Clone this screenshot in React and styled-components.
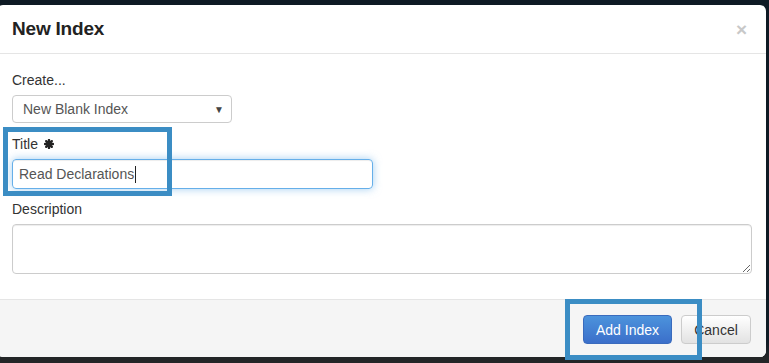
import React from 'react'
import styled, { createGlobalStyle } from 'styled-components'

const GlobalStyle = createGlobalStyle`
  html, body {
    margin: 0;
    padding: 0;
    background: #0f1b25;
    font-family: "Liberation Sans", Arial, sans-serif;
    overflow: hidden;
  }
`;

const Stage = styled.div`
  position: relative;
  width: 769px;
  height: 363px;
  background: linear-gradient(to bottom, #0e1a24 0, #0e1a24 340px, #232527 358px);
  padding-top: 5px;
  box-sizing: border-box;
`;

const Modal = styled.div`
  margin-left: -3px;
  width: 769px;
  background: #fff;
  border-radius: 6px;
  overflow: hidden;
  color: #333;
  font-size: 14px;
`;

const Header = styled.div`
  display: flex;
  align-items: center;
  justify-content: space-between;
  height: 48px;
  padding: 0 15px;
  border-bottom: 1px solid #e5e5e5;
  h4 {
    margin: 0;
    font-size: 19px;
    font-weight: bold;
    color: #222;
    letter-spacing: -0.2px;
  }
`;

const Close = styled.span`
  font-size: 19px;
  font-weight: bold;
  color: #c8c8c8;
  line-height: 1;
  margin-right: 4px;
`;

const Body = styled.div`
  padding: 16px 15px 25px;
`;

const Group = styled.div`
  margin-bottom: ${p => p.$gap ?? 11}px;
`;

const Label = styled.label`
  display: flex;
  align-items: center;
  gap: 6px;
  line-height: 20px;
  margin-bottom: 5px;
  color: #333;
`;

const Select = styled.div`
  display: flex;
  align-items: center;
  justify-content: space-between;
  width: 220px;
  height: 28px;
  box-sizing: border-box;
  border: 1px solid #ccc;
  border-radius: 4px;
  padding: 0 7px 0 10px;
  color: #555;
  span.arrow {
    font-size: 10px;
    color: #444;
  }
`;

const Input = styled.div`
  display: flex;
  align-items: center;
  width: 361px;
  height: 30px;
  box-sizing: border-box;
  border: 1px solid #66afe9;
  border-radius: 4px;
  padding: 0 6px;
  color: #555;
  box-shadow: inset 0 1px 1px rgba(0,0,0,.075), 0 0 8px rgba(102,175,233,.6);
`;

const Caret = styled.span`
  display: inline-block;
  width: 1px;
  height: 17px;
  background: #222;
  margin-left: 1px;
`;

const TextArea = styled.textarea`
  display: block;
  width: 740px;
  height: 50px;
  box-sizing: border-box;
  border: 1px solid #ccc;
  border-radius: 4px;
  box-shadow: inset 0 1px 1px rgba(0,0,0,.075);
  font-family: inherit;
  margin: 0;
`;

const Footer = styled.div`
  display: flex;
  justify-content: flex-end;
  gap: 9px;
  height: 58px;
  box-sizing: border-box;
  padding: 15px;
  background: #f5f5f5;
  border-top: 1px solid #e5e5e5;
`;

const Button = styled.button`
  height: 29px;
  padding: 0;
  white-space: nowrap;
  border-radius: 4px;
  font-family: inherit;
  font-size: 14px;
  ${p => p.$primary ? `
    width: 89px;
    color: #fff;
    border: 1px solid #3a6bbd;
    background: linear-gradient(to bottom, #4c93dc, #3b6fca);
  ` : `
    width: 70px;
    color: #333;
    border: 1px solid #ccc;
    background: linear-gradient(to bottom, #fff, #e2e2e2);
  `}
`;

const Highlight = styled.div`
  position: absolute;
  border: 5px solid #3b8dc4;
  box-sizing: border-box;
  pointer-events: none;
`;

const Asterisk = () => (
  <svg width="10" height="10" viewBox="0 0 10 10">
    <g stroke="#222" strokeWidth="2.4" strokeLinecap="round">
      <line x1="5" y1="1" x2="5" y2="9" />
      <line x1="1" y1="5" x2="9" y2="5" />
      <line x1="2.2" y1="2.2" x2="7.8" y2="7.8" />
      <line x1="2.2" y1="7.8" x2="7.8" y2="2.2" />
    </g>
    <circle cx="5" cy="5" r="2.4" fill="#222" />
  </svg>
);

const App = () => {
  return (
    <>
      <GlobalStyle />
      <Stage>
        <Modal>
          <Header>
            <h4>New Index</h4>
            <Close>×</Close>
          </Header>
          <Body>
            <Group>
              <Label>Create...</Label>
              <Select>
                <span>New Blank Index</span>
                <span className="arrow">▼</span>
              </Select>
            </Group>
            <Group $gap={10}>
              <Label>Title <Asterisk /></Label>
              <Input>Read Declarations<Caret /></Input>
            </Group>
            <Group $gap={0}>
              <Label>Description</Label>
              <TextArea />
            </Group>
          </Body>
          <Footer>
            <Button $primary>Add Index</Button>
            <Button>Cancel</Button>
          </Footer>
        </Modal>
        <Highlight style={{ left: 3, top: 127, width: 169, height: 69 }} />
        <Highlight style={{ left: 565, top: 299, width: 137, height: 61 }} />
      </Stage>
    </>
  )
}

export default App
